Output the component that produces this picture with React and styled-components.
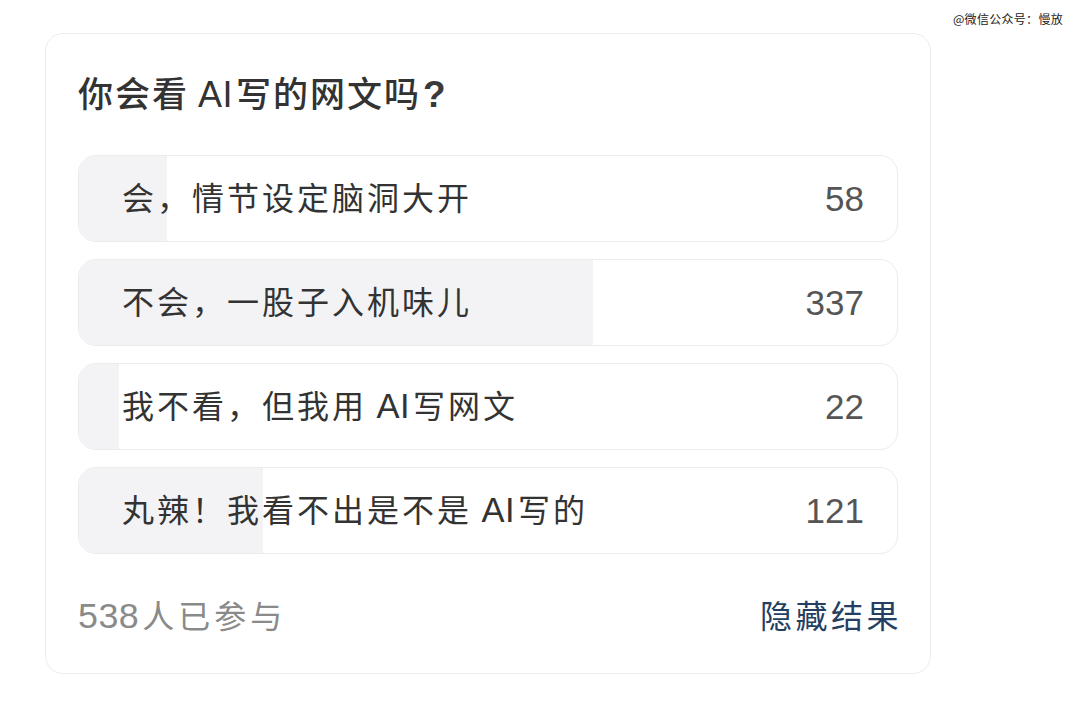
import React from 'react';
import styled, { createGlobalStyle } from 'styled-components';

const GlobalStyle = createGlobalStyle`
  html, body {
    margin: 0;
    padding: 0;
    background: #ffffff;
  }
  body {
    font-family: "Liberation Sans", "Noto Sans CJK SC", sans-serif;
  }
`;

const Page = styled.div`
  position: relative;
  width: 1080px;
  height: 702px;
  padding: 33px 0 0 45px;
  box-sizing: border-box;
`;

const Watermark = styled.div`
  position: absolute;
  top: 11px;
  right: 17px;
  font-family: "Noto Sans CJK SC", sans-serif;
  font-size: 12px;
  line-height: 16px;
  letter-spacing: 0.3px;
  color: #222;
`;

const Card = styled.div`
  width: 886px;
  height: 641px;
  box-sizing: border-box;
  border: 1px solid #ececec;
  border-radius: 18px;
  padding: 40px 32px 0 32px;
  display: flex;
  flex-direction: column;
`;

const Title = styled.h2`
  margin: 0 0 39px 0;
  height: 42px;
  font-size: 35px;
  line-height: 42px;
  font-weight: 500;
  letter-spacing: 2px;
  color: #333;
`;

const Question = styled.span`
  font-size: 37px;
  line-height: 1;
  font-weight: 700;
  color: #3a3a3a;
  margin-left: 2px;
`;

// Latin runs (AI, digits) sit tighter than the CJK glyphs around them
const Latin = styled.span`
  letter-spacing: 0.5px;
  font-size: ${(p) => p.$size || '1.08em'};
  margin-right: 3px;
`;

const Options = styled.div`
  display: flex;
  flex-direction: column;
  gap: 17px;
`;

const Option = styled.div`
  position: relative;
  height: 87px;
  box-sizing: border-box;
  border: 1px solid #ececec;
  border-radius: 18px;
  overflow: hidden;
  display: flex;
  align-items: center;
  justify-content: space-between;
  padding: 0 33px 0 43px;
`;

const Fill = styled.div`
  position: absolute;
  left: 0;
  top: 0;
  bottom: 0;
  background: #f3f3f5;
`;

const Label = styled.span`
  position: relative;
  font-size: 32px;
  line-height: 40px;
  letter-spacing: 3px;
  color: #333;
`;

const Count = styled.span`
  position: relative;
  font-size: 35px;
  line-height: 40px;
  color: #555;
`;

const Footer = styled.div`
  margin-top: 42px;
  display: flex;
  justify-content: space-between;
  align-items: center;
  line-height: 40px;
`;

const Joined = styled.span`
  font-size: 32px;
  letter-spacing: 4px;
  color: #8a8a8a;
`;

const HideLink = styled.span`
  font-size: 32px;
  letter-spacing: 3.5px;
  margin-right: -4px;
  color: #253f63;
`;

function withLatin(text, size) {
  return text.split(/([A-Za-z0-9]+)/).map((part, i) =>
    /^[A-Za-z0-9]+$/.test(part) ? <Latin key={i} $size={size}>{part}</Latin> : part.replace(/ /g, '\u2009'),
  );
}

const options = [
  { label: '会，情节设定脑洞大开', count: 58 },
  { label: '不会，一股子入机味儿', count: 337 },
  { label: '我不看，但我用 AI写网文', count: 22 },
  { label: '丸辣！我看不出是不是 AI写的', count: 121 },
];

const total = 538;
const trackWidth = 820;

export default function App() {
  return (
    <Page>
      <GlobalStyle />
      <Watermark>@微信公众号：慢放</Watermark>
      <Card>
        <Title>{withLatin('你会看 AI写的网文吗', '1.03em')}<Question>?</Question></Title>
        <Options>
          {options.map((o) => (
            <Option key={o.label}>
              <Fill style={{ width: `${Math.max(40, Math.round((o.count / total) * trackWidth))}px` }} />
              <Label>{withLatin(o.label)}</Label>
              <Count>{o.count}</Count>
            </Option>
          ))}
        </Options>
        <Footer>
          <Joined>{withLatin(`${total}人已参与`, '1.12em')}</Joined>
          <HideLink>隐藏结果</HideLink>
        </Footer>
      </Card>
    </Page>
  );
}
